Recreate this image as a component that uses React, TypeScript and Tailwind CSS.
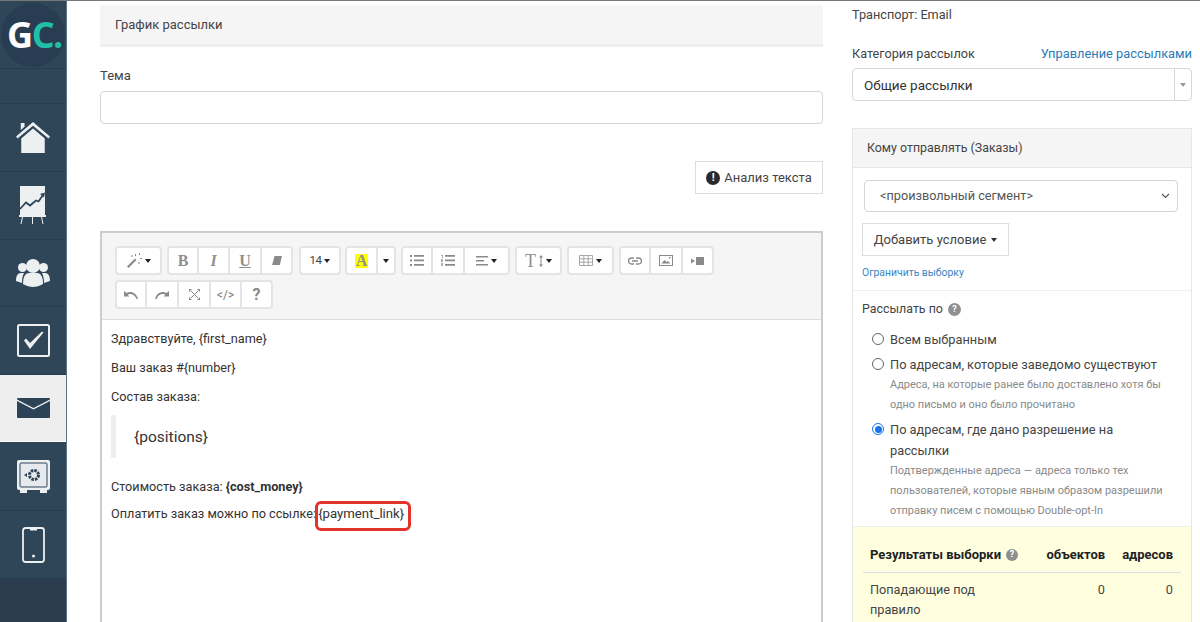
import type { ReactNode } from 'react'

const ICON = '#8a8a8a'

function Caret({ className = 'border-t-[#222]' }: { className?: string }) {
  return <span className={`inline-block h-0 w-0 border-x-[3.5px] border-t-[4px] border-x-transparent ${className}`} />
}

function HomeIcon() {
  return (
    <svg width="36" height="32" viewBox="0 0 36 34" fill="#ecf0f1">
      <path d="M5 1h4v4L5 8.500z" />
      <path d="M18 0 36 15.500 34.500 17.500 18 4 1.500 17.500 0 15.500z" />
      <path d="M5.500 17.500 18 7l12.500 10.500V33h-25z" />
    </svg>
  )
}

function ChartIcon() {
  return (
    <svg width="28" height="39" viewBox="0 0 28 39">
      <rect x="1" y="0" width="25" height="29" fill="#ecf0f1" />
      <path d="M1 23 7 16.500l4 3 6-5 2.500 1L24 9" fill="none" stroke="#2f4558" strokeWidth="1.800" />
      <path d="m21 8 5-1.500-1 5z" fill="#2f4558" />
      <rect x="0" y="29" width="27" height="2" fill="#ecf0f1" />
      <path d="m3.500 31-1.500 7M13.500 31v7M22.500 31l1.500 7" stroke="#ecf0f1" strokeWidth="1" />
    </svg>
  )
}

function PeopleIcon() {
  return (
    <svg width="34" height="29" viewBox="0 0 34 29" fill="#ecf0f1">
      <circle cx="6.500" cy="8.500" r="4.500" />
      <circle cx="27.500" cy="8.500" r="4.500" />
      <path d="M0 22c0-5 1.500-8 5-8h3c-1.500 3-2 6-2 10z" />
      <path d="M34 22c0-5-1.500-8-5-8h-3c1.500 3 2 6 2 10z" />
      <circle cx="17" cy="7" r="7" />
      <path d="M7 25c0-7 2-11 6-11h8c4 0 6 4 6 11-3 2-7 3-10 3s-7-1-10-3z" />
    </svg>
  )
}

function CheckIcon() {
  return (
    <svg width="33" height="33" viewBox="0 0 33 33">
      <rect x="1" y="1" width="31" height="31" rx="1.500" fill="none" stroke="#ecf0f1" strokeWidth="2" />
      <path d="m7 16.500 2-2 4 4.500L25 7.500l1.500 1L13 25z" fill="#ecf0f1" />
    </svg>
  )
}

function MailIcon() {
  return (
    <svg width="33" height="20" viewBox="0 0 33 20" fill="#2b4257">
      <path d="M0 1a1 1 0 0 1 1-1h31a1 1 0 0 1 1 1v.500L16.500 10 0 1.500z" />
      <path d="M0 3 16.500 11.500 33 3v16a1 1 0 0 1-1 1H1a1 1 0 0 1-1-1z" />
    </svg>
  )
}

function SafeIcon() {
  return (
    <svg width="33" height="33" viewBox="0 0 33 33">
      <rect x="0" y="0" width="33" height="30" rx="2" fill="#ecf0f1" />
      <rect x="3" y="3" width="27" height="24" rx="1" fill="#e6eaec" stroke="#2f4558" strokeWidth="1" />
      <rect x="3" y="30" width="7" height="3" fill="#ecf0f1" />
      <rect x="23" y="30" width="7" height="3" fill="#ecf0f1" />
      <circle cx="17" cy="15" r="4.500" fill="none" stroke="#2b4257" strokeWidth="3" strokeDasharray="2.500 1" />
      <path d="m7 15 3-2v4z" fill="#2b4257" />
    </svg>
  )
}

function PhoneIcon() {
  return (
    <svg width="23" height="36" viewBox="0 0 23 36">
      <rect x="1" y="1" width="21" height="34" rx="2.500" fill="none" stroke="#ecf0f1" strokeWidth="1.800" />
      <rect x="8" y="1" width="7" height="2.500" fill="#ecf0f1" />
      <circle cx="11.500" cy="29" r="1.500" fill="#ecf0f1" />
    </svg>
  )
}

function Logo() {
  return (
    <div className="flex h-[64px] w-[64px] items-center justify-center rounded-full bg-[#293d52] pl-[3px] font-['Open_Sans',sans-serif] text-[36px] font-bold tracking-[-1.5px]">
      <span className="text-white">G</span>
      <span className="text-[#1fbfa8]">C.</span>
    </div>
  )
}

function SideItem({ h, active, children }: { h: string; active?: boolean; children?: ReactNode }) {
  return (
    <div className={`flex ${h} items-center justify-center border-b ${active ? 'border-[#fff] bg-[#eeeeee]' : 'border-[#283c4f]'}`}>
      {children}
    </div>
  )
}

function Sidebar() {
  return (
    <aside className="flex w-[67px] shrink-0 flex-col border-r border-[#5c7488] bg-[#2f4558]">
      <div className="flex h-[68px] shrink-0 items-center justify-center border-b border-[#283c4f]">
        <Logo />
      </div>
      <SideItem h="h-[35px] shrink-0" />
      <SideItem h="h-[68px] shrink-0"><HomeIcon /></SideItem>
      <SideItem h="h-[68px] shrink-0"><ChartIcon /></SideItem>
      <SideItem h="h-[67px] shrink-0"><PeopleIcon /></SideItem>
      <SideItem h="h-[68px] shrink-0"><CheckIcon /></SideItem>
      <SideItem h="h-[67px] shrink-0" active><MailIcon /></SideItem>
      <SideItem h="h-[69px] shrink-0"><SafeIcon /></SideItem>
      <div className="flex h-[67px] shrink-0 items-center justify-center"><PhoneIcon /></div>
      <div className="flex-1 bg-[#2b3c4e]" />
    </aside>
  )
}

function Btn({ w, first, last, children }: { w: string; first?: boolean; last?: boolean; children: ReactNode }) {
  return (
    <div
      className={`flex ${w} h-full items-center justify-center gap-[3px] border-y-2 border-r-2 border-[#e4e4e4] bg-white ${first ? 'rounded-l-[4px] border-l-2' : ''} ${last ? 'rounded-r-[4px]' : ''}`}
    >
      {children}
    </div>
  )
}

function Group({ children, className = '' }: { children: ReactNode; className?: string }) {
  return <div className={`flex h-[29px] ${className}`}>{children}</div>
}

function ListIcon({ numbered }: { numbered?: boolean }) {
  return (
    <svg width="14" height="11" viewBox="0 0 14 11" fill={ICON}>
      {numbered ? <path d="M0 0h2v3H1V1H0zM0 8h2v3H0zM0 4h2v3H0z" opacity=".7" /> : <path d="M0 0h2v2H0zM0 4.500h2v2H0zM0 9h2v2H0z" />}
      <path d="M4 0h10v1.800H4zM4 4.500h10v1.800H4zM4 9h10v1.800H4z" />
    </svg>
  )
}

function Toolbar() {
  const serif = "font-['Liberation_Serif',serif] font-bold text-[16px] text-[#8f8f8f]"
  return (
    <div className="h-[87px] border-b border-[#dddddd] bg-[#f5f5f5] pl-[13px] pt-[13px]">
      <div className="flex gap-[5px]">
        <Group>
          <Btn w="w-[47px]" first last>
            <svg width="15" height="15" viewBox="0 0 15 15" fill={ICON}>
              <path d="m0 13.500 8-8 1.500 1.500-8 8z" />
              <path d="M8 1h1v2H8zM12 0h1v2h-1zM13 5h2v1h-2zM4 3l1-1 1 1-1 1zM11.500 9h1v2h-1z" />
            </svg>
            <Caret />
          </Btn>
        </Group>
        <Group>
          <Btn w="w-[32px]" first><span className={serif}>B</span></Btn>
          <Btn w="w-[31px]"><span className={`${serif} italic`}>I</span></Btn>
          <Btn w="w-[32px]"><span className={`${serif} underline`}>U</span></Btn>
          <Btn w="w-[31px]" last>
            <svg width="10" height="9" viewBox="0 0 12 11" fill={ICON}><path d="M3 0h9l-2.500 11H0z" /></svg>
          </Btn>
        </Group>
        <Group className="ml-[1px]">
          <Btn w="w-[42px]" first last>
            <span className="text-[11.5px] tracking-[-0.5px] text-[#444]">14</span>
            <Caret />
          </Btn>
        </Group>
        <Group className="-ml-[1px]">
          <Btn w="w-[33px]" first><span className={`${serif} bg-[#ffff00] px-[1px] leading-[14px]`}>A</span></Btn>
          <Btn w="w-[18px]" last><Caret /></Btn>
        </Group>
        <Group>
          <Btn w="w-[32px]" first><ListIcon /></Btn>
          <Btn w="w-[32px]"><ListIcon numbered /></Btn>
          <Btn w="w-[45px]" last>
            <svg width="12" height="10" viewBox="0 0 12 10" fill={ICON}><path d="M0 0h12v1.500H0zM0 4h8v1.500H0zM0 8h12v1.500H0z" /></svg>
            <Caret />
          </Btn>
        </Group>
        <Group>
          <Btn w="w-[47px]" first last>
            <span className="font-['Liberation_Serif',serif] text-[18px] leading-none text-[#8f8f8f]">T</span>
            <svg width="4" height="12" viewBox="0 0 4 12" fill={ICON}><path d="M1.500 2h1v8h-1zM2 0l2 2.500H0zM2 12 0 9.500h4z" /></svg>
            <Caret />
          </Btn>
        </Group>
        <Group>
          <Btn w="w-[47px]" first last>
            <svg width="14" height="11" viewBox="0 0 14 11" fill="none" stroke="#a8a8a8" strokeWidth="1"><path d="M.5.500h13v10H.5zM.5 3.800h13M.5 7.200h13M4.800.500v10M9.200.500v10" /></svg>
            <Caret />
          </Btn>
        </Group>
        <Group>
          <Btn w="w-[32px]" first>
            <svg width="14" height="8" viewBox="0 0 14 8" fill="none" stroke={ICON} strokeWidth="1.400"><path d="M6 1H3.500a3 3 0 0 0 0 6H6M8 1h2.500a3 3 0 0 1 0 6H8M4 4h6" /></svg>
          </Btn>
          <Btn w="w-[32px]">
            <svg width="14" height="11" viewBox="0 0 14 11"><rect x=".5" y=".5" width="13" height="10" fill="none" stroke={ICON} /><path d="m2.500 8.500 3-3.500 2 2 1.500-1 2.500 2.500z" fill={ICON} /><rect x="10" y="2" width="1.500" height="1.500" fill={ICON} /></svg>
          </Btn>
          <Btn w="w-[31px]" last>
            <svg width="13" height="8" viewBox="0 0 13 8" fill={ICON}><path d="M5 0h8v8H5zM0 1.500 4 4 0 6.500z" /></svg>
          </Btn>
        </Group>
      </div>
      <div className="mt-[5px] flex">
        <Group>
          <Btn w="w-[32px]" first>
            <svg width="14" height="8" viewBox="0 0 14 8" fill={ICON}><path d="M0 0v5.500h5.500L3.500 3.700C6.500 2 10.500 3 12.500 8H14C12.500 2 7 -.500 2.500 2z" /></svg>
          </Btn>
          <Btn w="w-[32px]">
            <svg width="14" height="8" viewBox="0 0 14 8" fill={ICON}><path d="M14 0v5.500H8.500l2-1.800C7.500 2 3.500 3 1.500 8H0C1.500 2 7 -.500 11.500 2z" /></svg>
          </Btn>
          <Btn w="w-[32px]">
            <svg width="11" height="11" viewBox="0 0 11 11" fill={ICON} stroke={ICON}>
              <path d="M2 2l7 7M9 2 2 9" fill="none" strokeWidth="1" />
              <path d="M0 0h3L0 3zM11 0v3L8 0zM0 11V8l3 3zM11 11H8l3-3z" stroke="none" />
            </svg>
          </Btn>
          <Btn w="w-[31px]"><span className="text-[12px] text-[#777]">&lt;/&gt;</span></Btn>
          <Btn w="w-[31px]" last><span className="text-[16px] font-bold text-[#8a8a8a]">?</span></Btn>
        </Group>
      </div>
    </div>
  )
}

function MainColumn() {
  return (
    <main className="ml-[33px] w-[723px] shrink-0">
      <div className="mt-[4px] flex h-[42px] items-center border-b-[3px] border-[#eeeeee] bg-[#f5f5f5] pl-[15px] pt-[1px] text-[13px] text-[#444]">
        График рассылки
      </div>
      <div className="mt-[21px] text-[13px] leading-[16px] text-[#444]">Тема</div>
      <div className="mt-[7px] h-[33px] rounded-[4px] border border-[#d4d4d4] bg-white" />
      <div className="mt-[37px] flex justify-end">
        <div className="flex h-[33px] w-[128px] items-center justify-center gap-[4px] border border-[#dddddd] bg-white text-[13px] text-[#444]">
          <span className="flex h-[14px] w-[14px] items-center justify-center rounded-full bg-[#2a2a2a] text-[11px] font-bold leading-none text-white">!</span>
          Анализ текста
        </div>
      </div>
      <div className="mt-[37px] h-[500px] border-x-2 border-t-2 border-[#cccccc] bg-white">
        <Toolbar />
        <div className="px-[9px] pt-[10px] text-[12.7px] leading-[18px] text-[#333]">
          <p>Здравствуйте, {'{first_name}'}</p>
          <p className="mt-[11px]">Ваш заказ #{'{number}'}</p>
          <p className="mt-[11px]">Состав заказа:</p>
          <div className="mt-[9px] flex h-[43px] items-center border-l-[5px] border-[#eeeeee] pl-[18px] text-[15.5px]">{'{positions}'}</div>
          <p className="mt-[20px]">Стоимость заказа: <b>{'{cost_money}'}</b></p>
          <p className="mt-[9px]">
            Оплатить заказ можно по ссылке:
            <span className="relative ml-[2px] text-[13.2px]">
              {'{payment_link}'}
              <span className="absolute -bottom-[10px] -left-[3px] -right-[7px] -top-[5px] rounded-[6px] border-[3px] border-[#e2342b]" />
            </span>
          </p>
        </div>
      </div>
    </main>
  )
}

function Radio({ checked, label, hint }: { checked?: boolean; label: ReactNode; hint?: ReactNode }) {
  return (
    <div className="flex gap-[6px]">
      <span
        className={`mt-[4px] h-[12px] w-[12px] shrink-0 rounded-full border ${checked ? 'border-[#1a73e8] bg-white p-[1.500px]' : 'border-[#666]'}`}
      >
        {checked && <span className="block h-full w-full rounded-full bg-[#1a73e8]" />}
      </span>
      <div>
        <div className="text-[12.8px] leading-[21px] text-[#444]">{label}</div>
        {hint && <div className="text-[11px] leading-[20px] text-[#8a8a8a]">{hint}</div>}
      </div>
    </div>
  )
}

function RightColumn() {
  return (
    <section className="ml-[29px] w-[340px] shrink-0 text-[12.7px] text-[#444]">
      <div className="mt-[6px] leading-[16px]">Транспорт: Email</div>
      <div className="mt-[23px] flex items-center justify-between leading-[16px]">
        <span>Категория рассылок</span>
        <span className="text-[12.85px] text-[#2a7ab9]">Управление рассылками</span>
      </div>
      <div className="mt-[6px] flex h-[33px] rounded-[4px] border border-[#d8d8d8] bg-white">
        <div className="flex flex-1 items-center pl-[11px] pt-[1px] text-[13.5px] text-[#333]">Общие рассылки</div>
        <div className="flex w-[17px] items-center justify-center border-l border-[#d8d8d8]">
          <Caret className="border-t-[#999]" />
        </div>
      </div>
      <div className="mt-[27px] h-[500px] border border-[#e6e6e6] bg-white">
        <div className="flex h-[39px] items-center border-b border-[#e6e6e6] bg-[#f5f5f5] pl-[14px] text-[12.4px]">Кому отправлять (Заказы)</div>
        <div className="border-b border-[#f0f0f0] pb-[11px] pl-[9px] pt-[12px]">
          <div className="ml-[2px] flex h-[32px] w-[314px] items-center justify-between rounded-[4px] border border-[#d4d4d4] pl-[15px] pr-[7px] text-[#555]">
            &lt;произвольный сегмент&gt;
            <svg width="9" height="6" viewBox="0 0 9 6" fill="none" stroke="#555" strokeWidth="1.200"><path d="m1 1 3.500 3.500L8 1" /></svg>
          </div>
          <div className="mt-[11px] flex h-[33px] w-[147px] items-center justify-center gap-[5px] border border-[#dddddd] bg-white text-[13px]">
            Добавить условие
            <Caret className="border-t-[#333]" />
          </div>
          <div className="mt-[10px] text-[10.4px] leading-[13px] text-[#3b86c4]">Ограничить выборку</div>
        </div>
        <div className="pl-[9px] pr-[12px] pt-[9px]">
          <div className="flex items-center gap-[5px] text-[12.4px] leading-[18px]">
            Рассылать по
            <span className="flex h-[13px] w-[13px] items-center justify-center rounded-full bg-[#8f8f8f] text-[9px] font-bold leading-none text-white">?</span>
          </div>
          <div className="mt-[11px] flex flex-col gap-[4px] pl-[10px]">
            <Radio label="Всем выбранным" />
            <Radio
              label="По адресам, которые заведомо существуют"
              hint={<>Адреса, на которые ранее было доставлено хотя бы<br />одно письмо и оно было прочитано</>}
            />
            <Radio
              checked
              label={<>По адресам, где дано разрешение на<br />рассылки</>}
              hint={<>Подтвержденные адреса — адреса только тех<br />пользователей, которые явным образом разрешили<br />отправку писем с помощью Double-opt-In</>}
            />
          </div>
        </div>
        <div className="mt-[5px] h-[120px] border-t border-[#eeeeee] bg-[#ffffe0] px-[10px] pt-[18px]">
          <div className="flex h-[28px] items-start justify-between border-b border-[#d9dde6] pl-[7px] pr-[8px] text-[13px] font-bold text-[#222]">
            <span className="flex items-center gap-[5px]">
              Результаты выборки
              <span className="flex h-[12px] w-[12px] items-center justify-center rounded-full bg-[#8f8f8f] text-[9px] leading-none text-white">?</span>
            </span>
            <span className="flex gap-[17px]"><span>объектов</span><span>адресов</span></span>
          </div>
          <div className="mt-[7px] flex justify-between pl-[7px] pr-[8px] leading-[20px]">
            <span>Попадающие под<br />правило</span>
            <span className="flex gap-[61px]"><span>0</span><span>0</span></span>
          </div>
        </div>
      </div>
    </section>
  )
}

export default function App() {
  return (
    <div className="flex h-[622px] w-[1200px] overflow-hidden border-t border-[#777777] bg-white font-['Roboto',sans-serif]">
      <Sidebar />
      <MainColumn />
      <RightColumn />
    </div>
  )
}
